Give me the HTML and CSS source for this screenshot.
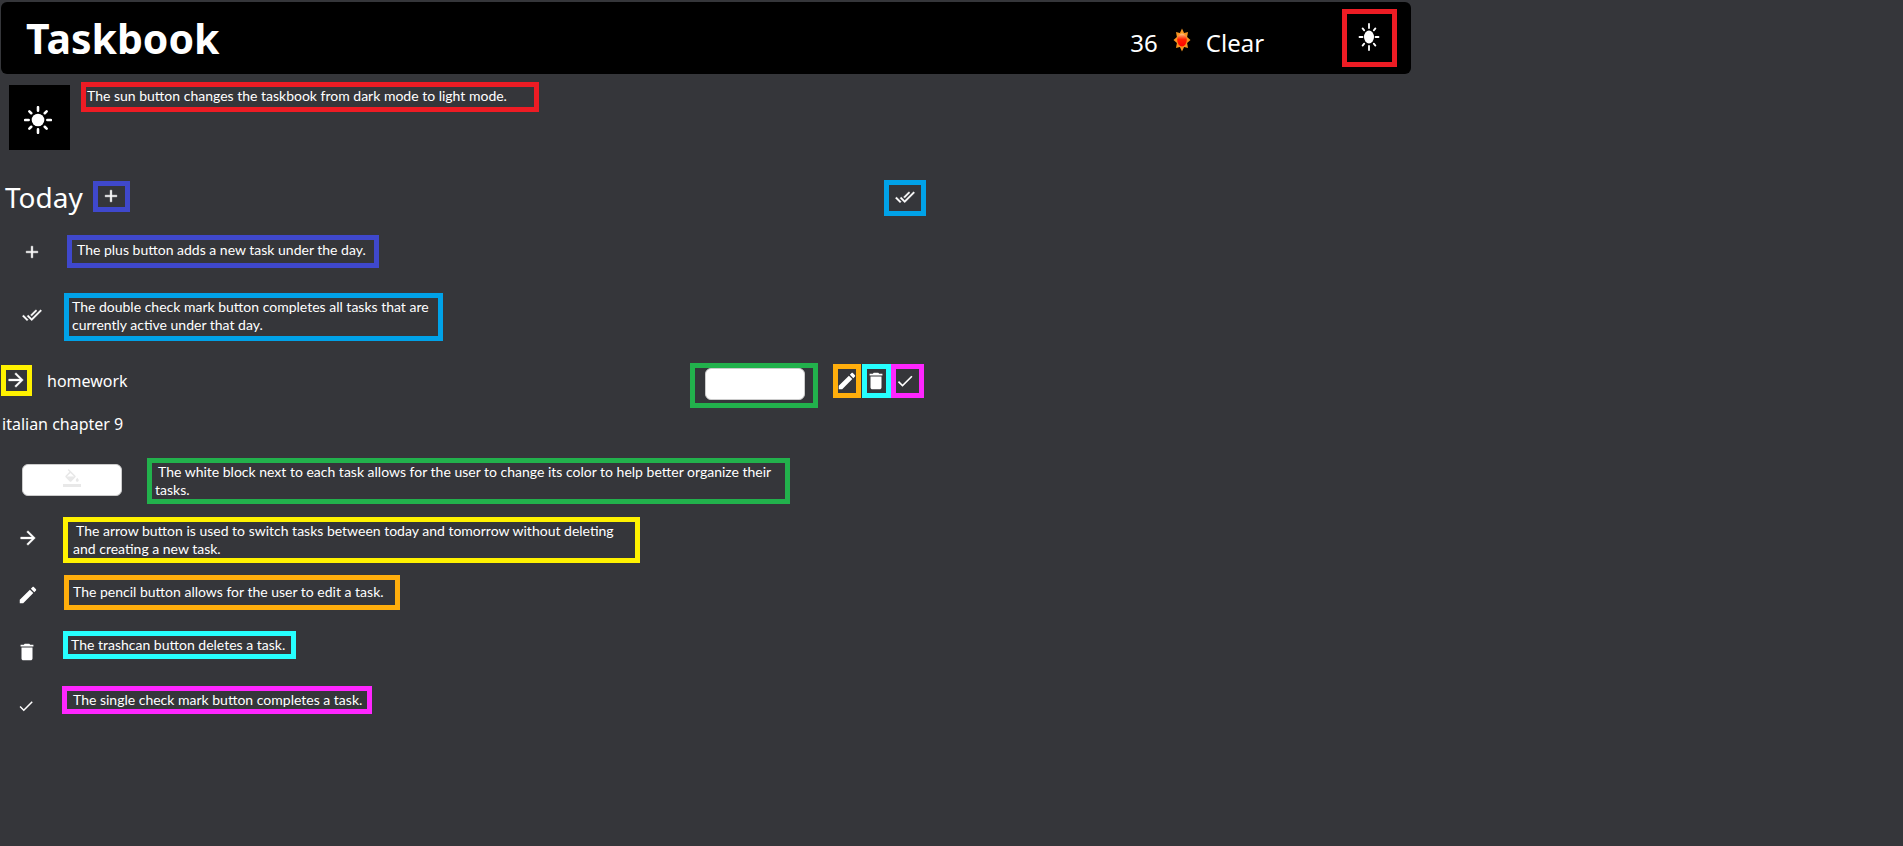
FILE: index.html
```
<!DOCTYPE html>
<html lang="en">
<head>
<meta charset="utf-8">
<title>Taskbook</title>
<link rel="stylesheet" href="styles.css">
</head>
<body>
<svg class="sprite" aria-hidden="true">
  <symbol id="sun" viewBox="0 0 24 24"><circle cx="12" cy="12" r="5.4"/><path d="M12 1v3M12 20v3M1 12h3M20 12h3M4.600 4.600l1.600 1.600M17.800 17.800l1.600 1.600M4.600 19.400l1.600-1.600M17.800 6.200l1.600-1.600" fill="none" stroke="currentColor" stroke-width="2.200" stroke-linecap="round"/></symbol>
  <symbol id="sun-tall" viewBox="0 0 22 28"><ellipse cx="11" cy="14" rx="5" ry="6.500"/><path d="M11 1v4M11 23v4M1.500 14h3M17.500 14h3M4.600 5.400l1.600 2M15.800 20.600l1.600 2M4.600 22.600l1.600-2M15.800 7.400l1.600-2" fill="none" stroke="currentColor" stroke-width="1.800" stroke-linecap="round"/></symbol>
  <symbol id="plus" viewBox="0 0 24 24"><path d="M19 13h-6v6h-2v-6H5v-2h6V5h2v6h6v2z" stroke="currentColor" stroke-width=".5"/></symbol>
  <symbol id="done-all" viewBox="0 0 24 24"><path d="M18 7l-1.410-1.410-6.340 6.340 1.410 1.410L18 7zm4.240-1.410L11.660 16.170 7.480 12l-1.410 1.410L11.660 19l12-12-1.420-1.410zM.41 13.410L6 19l1.410-1.410L1.830 12 .41 13.410z" stroke="currentColor" stroke-width=".4"/></symbol>
  <symbol id="arrow" viewBox="0 0 24 24"><path d="M12 4l-1.410 1.410L16.170 11H4v2h12.170l-5.580 5.590L12 20l8-8z" stroke="currentColor" stroke-width=".4"/></symbol>
  <symbol id="pencil" viewBox="0 0 24 24"><path d="M3 17.250V21h3.750L17.810 9.940l-3.750-3.750L3 17.250zM20.710 7.040c.39-.39.39-1.020 0-1.410l-2.340-2.340c-.39-.39-1.020-.39-1.410 0l-1.830 1.830 3.750 3.750 1.830-1.830z"/></symbol>
  <symbol id="trash" viewBox="0 0 24 24"><path d="M6 19c0 1.100.9 2 2 2h8c1.100 0 2-.9 2-2V7H6v12zM19 4h-3.500l-1-1h-5l-1 1H5v2h14V4z"/></symbol>
  <symbol id="check" viewBox="0 0 24 24"><path d="M9 16.170L4.830 12l-1.420 1.410L9 19 21 7l-1.410-1.410z"/></symbol>
  <symbol id="fill" viewBox="0 0 24 24"><path d="M16.560 8.940L7.620 0 6.210 1.410l2.380 2.380-5.150 5.150c-.59.59-.59 1.540 0 2.120l5.500 5.500c.29.29.68.44 1.060.44s.77-.15 1.060-.44l5.500-5.500c.59-.58.59-1.530 0-2.120zM5.210 10L10 5.210 14.790 10H5.210zM19 11.500s-2 2.170-2 3.500c0 1.100.9 2 2 2s2-.9 2-2c0-1.330-2-3.500-2-3.500zM0 20h24v4H0v-4z"/></symbol>
</svg>

<header class="topbar">
  <h1 class="brand">Taskbook</h1>
  <div class="weather">
    <span>36</span>
    <svg class="weather-icon" viewBox="0 0 18 24" aria-hidden="true">
      <defs><linearGradient id="glow" x1="0" y1="0" x2="0" y2="1"><stop offset="0" stop-color="#ffd080"/><stop offset=".45" stop-color="#ff2000"/><stop offset="1" stop-color="#f00"/></linearGradient></defs>
      <path fill="#f79420" d="M9 .5l2.100 4.600L15 3.900l-.9 5.200 3.400 2.900-3.400 2.900.9 5.200-3.900-1.200L9 23.500l-2.100-4.600L3 20.100l.9-5.200L.5 12l3.400-2.900L3 3.900l3.900 1.200z"/>
      <ellipse cx="9" cy="12" rx="4.800" ry="6.500" fill="url(#glow)"/>
    </svg>
    <span>Clear</span>
  </div>
  <button class="mark mark-red theme" type="button" aria-label="Toggle theme"><svg class="icon icon-tall"><use href="#sun-tall"/></svg></button>
</header>

<main class="page">
  <section class="legend legend-theme">
    <span class="tile"><svg class="icon icon-28"><use href="#sun"/></svg></span>
    <p class="note mark-red">The sun button changes the taskbook from dark mode to light mode.</p>
  </section>

  <section class="row day">
    <h2 class="day-name">Today</h2>
    <button class="mark mark-indigo add" type="button" aria-label="Add task"><svg class="icon icon-20"><use href="#plus"/></svg></button>
    <button class="mark mark-blue all" type="button" aria-label="Complete all tasks"><svg class="icon icon-20"><use href="#done-all"/></svg></button>
  </section>

  <section class="legend legend-plus">
    <svg class="icon icon-20"><use href="#plus"/></svg>
    <p class="note mark-indigo">The plus button adds a new task under the day.</p>
  </section>
  <section class="legend legend-all">
    <svg class="icon icon-20"><use href="#done-all"/></svg>
    <p class="note mark-blue">The double check mark button completes all tasks that are<br>currently active under that day.</p>
  </section>

  <section class="row task">
    <button class="mark mark-yellow move" type="button" aria-label="Move to tomorrow"><svg class="icon icon-22"><use href="#arrow"/></svg></button>
    <h3 class="task-name">homework</h3>
    <div class="mark mark-green swatch-frame"><button class="swatch" type="button" aria-label="Task color"></button></div>
    <div class="actions">
      <button class="mark mark-orange edit" type="button" aria-label="Edit task"><svg class="icon icon-22"><use href="#pencil"/></svg></button>
      <button class="mark mark-cyan delete" type="button" aria-label="Delete task"><svg class="icon icon-22"><use href="#trash"/></svg></button>
      <button class="mark mark-magenta finish" type="button" aria-label="Complete task"><svg class="icon icon-20"><use href="#check"/></svg></button>
    </div>
  </section>
  <p class="details">italian chapter 9</p>

  <section class="legend legend-swatch">
    <button class="swatch" type="button" aria-label="Task color"><svg class="icon icon-18"><use href="#fill"/></svg></button>
    <p class="note mark-green"><span class="lead">The white block next to each task allows for the user to change its color to help better organize their</span><br>tasks.</p>
  </section>
  <section class="legend legend-arrow">
    <svg class="icon icon-22"><use href="#arrow"/></svg>
    <p class="note mark-yellow"><span class="lead">The arrow button is used to switch tasks between today and tomorrow without deleting</span><br>and creating a new task.</p>
  </section>
  <section class="legend legend-pencil">
    <svg class="icon icon-22"><use href="#pencil"/></svg>
    <p class="note mark-orange">The pencil button allows for the user to edit a task.</p>
  </section>
  <section class="legend legend-trash">
    <svg class="icon icon-22"><use href="#trash"/></svg>
    <p class="note mark-cyan">The trashcan button deletes a task.</p>
  </section>
  <section class="legend legend-check">
    <svg class="icon icon-18"><use href="#check"/></svg>
    <p class="note mark-magenta">The single check mark button completes a task.</p>
  </section>
</main>
</body>
</html>
```
FILE: styles.css
```
* { box-sizing: border-box; }

body {
  margin: 0;
  padding-top: 2px;
  background: #35363a;
  color: #fff;
  font-family: "Noto Sans", "Open Sans", sans-serif;
}

h1, h2, h3, p { margin: 0; font-weight: 400; }

button {
  padding: 0;
  border: 0;
  background: none;
  color: inherit;
  font: inherit;
  cursor: pointer;
}

.sprite { position: absolute; width: 0; height: 0; }

.icon { display: block; flex: none; fill: currentColor; }
.icon-18 { width: 18px; height: 18px; }
.icon-20 { width: 20px; height: 20px; }
.icon-22 { width: 22px; height: 22px; }
.icon-28 { width: 28px; height: 28px; }
.icon-tall { width: 22px; height: 28px; }

/* Coloured outlines */
.mark { display: flex; align-items: center; justify-content: center; border: 5px solid; }
.note { border: 5px solid; font: 14px/18px Lato, "Noto Sans", sans-serif; color: #fff; }
.mark-red { border-color: #ed1c24; }
.mark-indigo { border-color: #3f48cc; }
.mark-blue { border-color: #00a2e8; }
.mark-yellow { border-color: #fff200; }
.mark-green { border-color: #22b14c; }
.mark-orange { border-color: #ffae0c; }
.mark-cyan { border-color: #26ffff; }
.mark-magenta { border-color: #ff26ff; }

/* Header */
.topbar {
  display: flex;
  align-items: center;
  width: 74.1%;
  height: 72px;
  margin-left: 1px;
  padding: 0 14px 0 25px;
  border-radius: 6px;
  background: #000;
}
.brand {
  margin-right: auto;
  font-size: 41px;
  font-weight: 700;
}
.weather { display: flex; align-items: center; gap: 15px; padding-top: 10px; margin-right: 78px; font-size: 24px; line-height: 30px; }
.weather-icon { width: 18px; height: 24px; margin-bottom: 6px; }
.theme { width: 55px; height: 58px; padding: 0 2px 2px 0; }

/* Legend rows */
.legend { display: flex; align-items: center; }
.lead { padding-left: 3px; }

.legend-theme { align-items: flex-start; gap: 11px; padding: 8px 0 0 9px; }
.legend-theme .note { padding: 0 27px 2px 1px; }
.tile { display: flex; flex: none; align-items: center; justify-content: center; width: 61px; height: 65px; margin-top: 3px; padding: 5px 4px 0 0; background: #000; }

.row { display: flex; align-items: center; width: 926px; }
.day { margin-top: 30px; padding-left: 5px; height: 36px; }
.day-name { font-size: 28px; line-height: 34px; margin-bottom: 2px; }
.add { width: 37px; height: 31px; margin: 0 auto 3px 10px; padding-bottom: 2px; }
.all { width: 42px; height: 36px; padding-bottom: 2px; }

.legend-plus { margin-top: 19px; padding-left: 22px; gap: 25px; }
.legend-plus .note { padding: 1px 8px 4px 5px; }
.legend-all { margin-top: 25px; padding-left: 22px; gap: 22px; }
.legend-all .note { padding: 0 9px 2px 3px; }
.legend-all .icon { margin-bottom: 4px; }

.task { margin-top: 22px; padding: 0 2px 0 1px; }
.move { width: 31px; height: 31px; margin-bottom: 10px; padding: 0 2px 2px 0; }
.task-name { margin: 0 auto 10px 15px; font-size: 16px; line-height: 24px; }
.swatch-frame { width: 128px; height: 45px; align-items: flex-start; padding-left: 2px; }
.swatch { display: flex; flex: none; justify-content: center; width: 100px; height: 32px; padding-top: 4px; border: 1px solid #ccc; border-radius: 6px; background: #fff; color: #e8e8e8; }
.actions { display: flex; margin: 0 0 9px 15px; }
.edit { width: 28px; height: 34px; margin-right: 1px; }
.delete { width: 29px; height: 34px; padding-right: 2px; }
.finish { width: 33px; height: 34px; padding-right: 5px; }
.details { margin-top: 4px; padding-left: 2px; font-size: 16px; line-height: 24px; }

.legend-swatch { margin-top: 22px; padding-left: 22px; gap: 25px; }
.legend-swatch .note { padding: 0 14px 0 3px; }
.legend-swatch .swatch { margin-bottom: 3px; }
.legend-arrow { margin-top: 13px; padding-left: 17px; gap: 24px; }
.legend-arrow .note { padding: 0 21px 0 5px; }
.legend-arrow .icon { margin-bottom: 4px; }
.legend-pencil { margin-top: 12px; padding-left: 17px; gap: 25px; }
.legend-pencil .note { padding: 3px 11px 4px 4px; }
.legend-pencil .icon { margin-top: 4px; }
.legend-trash { height: 32px; margin-top: 21px; padding-left: 16px; gap: 25px; align-items: flex-end; }
.legend-trash .note { padding: 0 6px 0 3px; }
.legend-check { height: 29px; margin-top: 23px; padding-left: 17px; gap: 27px; align-items: flex-end; }
.legend-check .note { padding: 0 5px 0 6px; }
.legend-trash .note, .legend-check .note { align-self: flex-start; }
.legend-swatch .note, .legend-arrow .note, .legend-trash .note, .legend-check .note { line-height: 18px; }
```
